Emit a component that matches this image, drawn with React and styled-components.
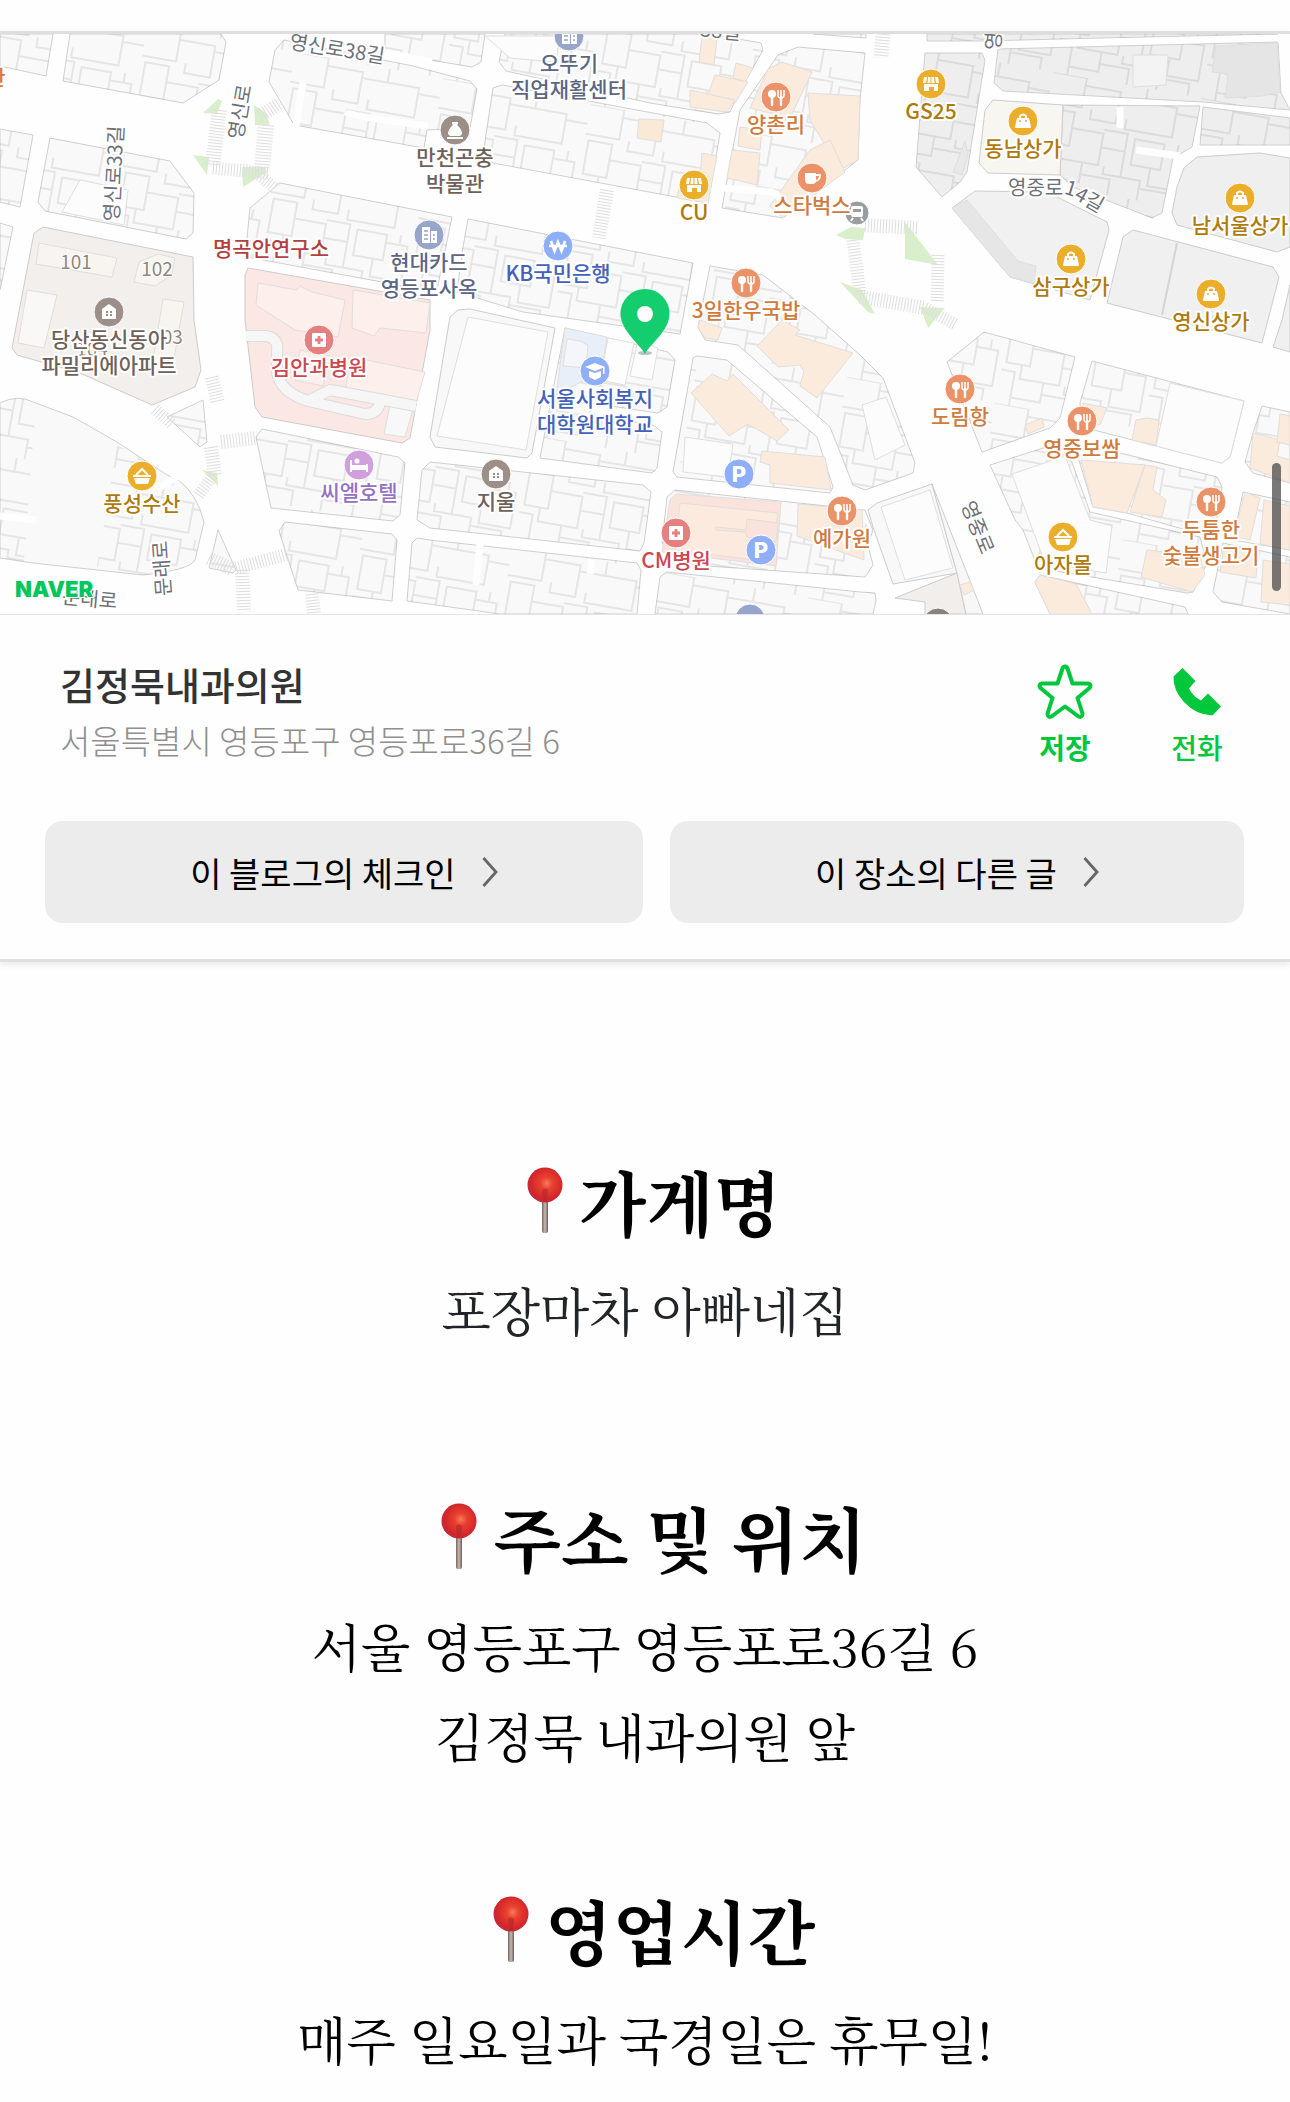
import React from "react";
import styled, { createGlobalStyle } from "styled-components";

const RED = "#cd4650";
const GOLD = "#ae7a0c";
const ORANGE = "#d07a3c";
const SLATE = "#5c6683";
const BLUE = "#4461ba";
const BROWN = "#6e6159";

// city blocks that get the small parcel outlines
const BLOCKS = [
  "0,34 53,34 46,76 0,66",
  "70,34 63,81 183,103 219,80 226,42 221,34",
  "269,82 275,50 284,40 413,66 470,81 477,89 470,128 427,130 424,148 300,126 293,123",
  "385,34 485,34 481,62 472,67 430,60 385,50",
  "505,34 499,62 506,71 650,103 718,114 730,112 738,95 763,50 761,43 710,34",
  "493,88 502,85 707,123 720,133 708,203 493,163 483,155",
  "778,55 798,47 865,53 860,100 858,160 783,218 722,208 728,175 740,110",
  "813,34 866,34 866,38",
  "0,129 33,135 20,207 0,202",
  "50,138 170,161 194,193 193,233 186,239 45,211 38,202",
  "0,223 13,227 0,290",
  "280,183 452,217 437,290 425,290 247,257 247,238 250,208",
  "468,219 693,263 680,334 523,312 457,292 463,247",
  "565,328 668,352 675,360 667,407 658,413 590,403 590,415 653,425 662,432 657,468 652,473 540,458",
  "710,266 763,275 815,315 860,355 883,378 915,463 913,473 865,490 853,485 830,427 738,345 705,340 698,327",
  "693,358 697,356 727,360 817,437 833,487 830,493 677,477 673,472",
  "675,490 865,510 873,530 868,545 873,565 865,577 693,565 662,543 667,497",
  "422,470 430,462 643,485 651,492 644,543 640,551 430,528 417,520",
  "262,429 398,457 405,463 400,515 393,521 271,508 256,437",
  "285,522 392,534 397,540 392,601 298,590 279,531",
  "417,538 430,540 637,563 641,570 637,614 500,614 407,601 412,543",
  "667,572 860,592 875,593 876,600 873,614 655,614 660,577",
  "203,400 207,442 200,447 167,417",
  "218,530 236,570 233,573 209,568",
  "984,332 1075,357 1060,418 1050,428 982,452 947,362",
  "1092,361 1244,401 1230,457 1222,463 1082,427 1080,403",
  "1262,406 1290,412 1290,483 1253,473 1245,462 1253,433",
  "990,465 1043,448 1070,457 1090,512 1200,537 1207,563 1193,592 1187,593 1038,568 1023,530 1015,520",
  "1078,457 1120,453 1217,477 1222,487 1215,530 1193,532 1127,513 1093,507",
  "1243,492 1290,502 1290,550 1233,540",
  "1223,543 1290,557 1290,614 1222,602 1213,592",
  "1040,575 1185,607 1188,614 1050,614 1035,582",
];

// the market side of the map is a darker grey
const GREY_BLOCKS = [
  "927,34 1278,34 1100,38 983,41 927,41",
  "925,53 982,53 985,60 967,172 960,182 942,197 916,167",
  "998,49 1278,42 1281,93 1290,110 1203,102 1003,91 994,83",
  "1063,105 1200,106 1192,147 1173,158 1162,213 1152,218 1073,187 1060,175",
  "1203,107 1290,118 1290,145 1200,145",
];

const PLAIN_AREAS = [
  ["#efefef", "1197,157 1260,153 1290,158 1290,247 1277,252 1177,225 1172,213 1177,187 1184,168"],
  ["#f1f1f1", "952,208 975,191 1047,192 1107,222 1109,230 1090,300 1010,277"],
  ["#f0f0f0", "1133,230 1273,267 1279,277 1262,343 1107,303 1123,237"],
  ["#f0f0f0", "1290,285 1282,320 1273,347 1290,352"],
  ["#f8f6f1", "993,100 1063,105 1060,175 988,173 979,163 985,110"],
  ["#f2efec", "43,227 193,257 194,320 201,370 195,387 152,405 80,373 17,355 12,348 34,233"],
  ["#fbe7e3", "248,268 430,300 430,330 410,438 402,443 262,417 255,407 245,320 245,275"],
  ["#f8f8f8", "458,310 470,309 555,328 532,453 527,458 435,447 430,437 450,317"],
  ["#f8f8f8", "868,510 877,503 932,484 957,573 893,584 873,527"],
  ["#f1eeeb", "895,598 957,573 966,614 925,614 925,602"],
  ["#f7f7f7", "932,484 983,614 966,614 957,573"],
];

const BUILDINGS = [
  // apartments
  ["#f8f5f0", "39,243 117,258 112,277 36,264"],
  ["#f8f5f0", "139,262 158,254 175,258 172,275 155,286 134,282"],
  ["#f8f5f0", "163,299 184,302 171,375 151,372"],
  ["#f9f8f7", "27,290 57,295 44,348 18,343"],
  // eye hospital
  ["#fdefec", "258,283 297,290 300,286 312,292 345,300 338,337 295,330 256,305"],
  ["#fdefec", "353,290 430,303 426,333 380,328 374,336 352,328"],
  ["#fdefec", "352,357 425,372 416,403 345,390"],
  ["#fdefec", "300,350 330,356 323,386 295,380"],
  ["#f8f8f8", "390,405 413,409 405,437 384,434"],
  // CM hospital
  ["#fae3dd", "676,494 781,502 776,566 662,552 670,500"],
  ["#fbeadd", "680,503 778,513 770,562 675,550"],
  ["#fbe3dd", "747,519 778,523 776,542 747,537 745,532 716,530 716,527 746,530"],
  ["#fbebdd", "798,504 862,510 864,560 797,536"],
  // university
  ["#e8eff8", "565,328 607,337 602,371 556,395"],
  ["#f4f6fb", "567,339 580,341 588,345 586,368 563,366"],
  ["#fdfdfd", "608,338 634,343 625,385 600,380"],
  ["#fdfdfd", "638,340 658,348 652,380 630,376"],
  // restaurants
  ["#fbebdd", "712,374 727,381 733,374 789,430 777,441 748,424 729,436 691,393"],
  ["#fbebdd", "762,451 825,457 831,490 770,483 770,465 760,462"],
  ["#fbebdd", "782,320 800,330 795,335 853,353 817,398 800,386 804,371 800,365 778,367 757,346"],
  ["#fbebdd", "700,320 722,328 718,340 705,338 698,327"],
  ["#fbebdd", "768,69 782,62 812,72 790,118 750,108"],
  ["#fbebdd", "808,93 860,96 858,160 840,170 810,120"],
  ["#fbebdd", "740,127 762,130 760,150 738,146"],
  ["#fbebdd", "732,150 760,153 757,185 727,178"],
  ["#fbebdd", "810,150 830,140 845,172 783,218 770,206"],
  ["#fbebdd", "702,37 717,38 714,65 699,62"],
  ["#fbebdd", "736,63 753,68 745,82 733,78"],
  ["#fbebdd", "715,75 748,82 735,103 708,95"],
  ["#fbebdd", "690,90 735,100 727,112 690,107"],
  ["#fbe9d8", "639,119 664,120 661,142 637,138"],
  ["#fbebdd", "702,153 717,156 708,203 677,198 680,185 700,180"],
  ["#fbebdd", "1081,460 1145,465 1127,513 1093,507"],
  ["#fbebdd", "1145,465 1157,467 1153,490 1166,500 1162,517 1130,512"],
  ["#fbebdd", "1147,418 1159,420 1156,445 1132,440 1136,420"],
  ["#fbebdd", "1025,425 1042,418 1044,427 1028,434"],
  ["#fbebdd", "1083,403 1107,408 1100,425 1085,420"],
  ["#fbebdd", "1253,433 1280,440 1277,456 1290,460 1290,483 1250,468"],
  ["#fbebdd", "1280,414 1290,416 1290,445 1277,442"],
  ["#fbebdd", "1245,492 1260,498 1250,540 1234,536"],
  ["#fbebdd", "1264,500 1290,506 1290,550 1260,544"],
  ["#fbebdd", "1147,550 1200,556 1205,575 1192,592 1141,577"],
  ["#fbebdd", "1224,545 1258,552 1256,578 1220,572"],
  ["#fbebdd", "1263,560 1290,564 1290,605 1261,602"],
  ["#fbebdd", "1040,575 1076,584 1092,614 1050,614 1035,582"],
  ["#fbebdd", "960,585 970,582 974,590 964,595"],
  // markets
  ["#e6e6e6", "952,208 967,200 1018,261 1036,266 1034,283 1010,277"],
  ["#f3f3f3", "1133,55 1168,55 1166,85 1133,87"],
  ["#e5e5e5", "1216,46 1277,43 1280,92 1262,96 1225,98 1228,74 1212,72"],
  ["#e8e8e8", "965,141 968,155 962,175 953,172"],
  // big lots
  ["#fcfcfc", "468,317 548,332 526,450 437,436"],
  ["#fcfcfc", "1170,383 1244,401 1230,457 1222,463 1156,446"],
  ["#fcfcfc", "1012,474 1065,456 1090,520 1112,526 1106,573 1045,563"],
  ["#fcfcfc", "862,405 886,397 905,445 875,460"],
  ["#fcfcfc", "881,507 930,490 953,568 905,580"],
  ["#fcfcfc", "685,437 733,444 728,477 683,472"],
  ["#fcfcfc", "485,36 560,36 556,62 510,58"],
  ["#fcfcfc", "80,180 128,190 124,225 62,212"],
];

const ALLEYS = [
  "M303,82 L296,126",
  "M346,112 Q350,116 428,126",
  "M722,188 L772,192 Q782,196 783,210",
  "M1120,107 V128",
  "M1136,150 L1180,156",
  "M0,516 L36,520",
  "M480,544 L476,585",
  "M592,560 L590,574",
  "M382,52 L432,62",
  "M157,489 L177,477",
];

const CROSSWALKS = [
  ["M219,110 L213,165", 15],
  ["M266,125 L262,170", 16],
  ["M213,168 L268,173", 13],
  ["M260,116 L280,103", 13],
  ["M255,172 L275,188", 12],
  ["M607,190 L599,238", 14],
  ["M883,34 L881,58", 15],
  ["M853,240 L860,295", 13],
  ["M865,225 L918,228", 14],
  ["M860,297 L925,308", 14],
  ["M938,255 L937,302", 13],
  ["M925,308 L955,324", 12],
  ["M212,377 L218,403", 14],
  ["M155,409 L173,425", 12],
  ["M221,442 L257,438", 14],
  ["M211,447 L215,475", 14],
  ["M213,475 L198,496", 12],
  ["M209,558 L233,570", 14],
  ["M236,568 L288,554", 13],
  ["M242,570 L244,612", 14],
  ["M312,594 L314,614", 14],
];

const ISLANDS = [
  "203,113 218,99 222,101 217,114",
  "254,105 266,113 270,125 255,125",
  "193,155 209,157 207,175",
  "242,167 265,167 267,172 243,187",
  "202,470 217,473 218,486",
  "836,235 851,227 865,228 863,240 845,239",
  "840,282 862,290 875,314 868,312",
  "905,222 928,252 938,265 905,259",
  "920,307 945,308 928,328",
];

const PLACES = [
  { x: 569, y: 36, icon: "office", bg: "#97a5cb", color: SLATE, lines: ["오뚜기", "직업재활센터"] },
  { x: 455, y: 130, icon: "museum", bg: "#9b8f87", color: BROWN, lines: ["만천곤충", "박물관"] },
  { x: 429, y: 235, icon: "office", bg: "#97a5cb", color: SLATE, lines: ["현대카드", "영등포사옥"] },
  { x: 558, y: 246, icon: "won", bg: "#8eaef5", color: BLUE, lines: ["KB국민은행"] },
  { x: 694, y: 185, icon: "store", bg: "#ebae2b", color: GOLD, lines: ["CU"] },
  { x: 776, y: 97, icon: "food", bg: "#eb9268", color: ORANGE, lines: ["양촌리"] },
  { x: 857, y: 213, icon: "subway", bg: "#9a9d9f", color: SLATE, r: 12, lines: [] },
  { x: 812, y: 178, icon: "cup", bg: "#eb9268", color: ORANGE, lines: ["스타벅스"] },
  { x: 931, y: 84, icon: "store", bg: "#ebae2b", color: GOLD, lines: ["GS25"] },
  { x: 1023, y: 121, icon: "bag", bg: "#ebae2b", color: GOLD, lines: ["동남상가"] },
  { x: 1240, y: 198, icon: "bag", bg: "#ebae2b", color: GOLD, lines: ["남서울상가"] },
  { x: 1071, y: 259, icon: "bag", bg: "#ebae2b", color: GOLD, lines: ["삼구상가"] },
  { x: 1211, y: 294, icon: "bag", bg: "#ebae2b", color: GOLD, lines: ["영신상가"] },
  { x: 746, y: 283, icon: "food", bg: "#eb9268", color: ORANGE, lines: ["3일한우국밥"] },
  { x: 960, y: 389, icon: "food", bg: "#eb9268", color: ORANGE, lines: ["도림항"] },
  { x: 1082, y: 421, icon: "food", bg: "#eb9268", color: ORANGE, lines: ["영중보쌈"] },
  { x: 1211, y: 502, icon: "food", bg: "#eb9268", color: ORANGE, lines: ["두툼한", "숯불생고기"] },
  { x: 842, y: 511, icon: "food", bg: "#eb9268", color: ORANGE, lines: ["예가원"] },
  { x: 1063, y: 537, icon: "basket", bg: "#ebae2b", color: GOLD, lines: ["아자몰"] },
  { x: 142, y: 476, icon: "basket", bg: "#ebae2b", color: GOLD, lines: ["풍성수산"] },
  { x: 109, y: 312, icon: "house", bg: "#9b8f87", color: BROWN, lines: ["당산동신동아", "파밀리에아파트"] },
  { x: 319, y: 340, icon: "hospital", bg: "#e5807e", color: RED, lines: ["김안과병원"] },
  { x: 359, y: 465, icon: "bed", bg: "#cfa0dc", color: "#9570c2", lines: ["씨엘호텔"] },
  { x: 496, y: 474, icon: "house", bg: "#9b8f87", color: BROWN, lines: ["지울"] },
  { x: 676, y: 533, icon: "hospital", bg: "#e5807e", color: RED, lines: ["CM병원"] },
  { x: 739, y: 474, icon: "parking", bg: "#8eaef5", color: BLUE, lines: [] },
  { x: 761, y: 550, icon: "parking", bg: "#8eaef5", color: BLUE, lines: [] },
  { x: 595, y: 371, icon: "school", bg: "#8eaef5", color: BLUE, lines: ["서울사회복지", "대학원대학교"] },
  { x: 750, y: 619, icon: "", bg: "#97a5cb", color: SLATE, lines: [] },
  { x: 938, y: 623, icon: "", bg: "#8b817c", color: BROWN, lines: [] },
];

const ROADS = [
  { x: 336, y: 56, rotate: 9, name: "영신로38길" },
  { x: 247, y: 113, rotate: -80, name: "영신로" },
  { x: 121, y: 174, rotate: -87, name: "영신로33길" },
  { x: 971, y: 530, rotate: 68, name: "영중로" },
  { x: 169, y: 568, rotate: -94, name: "문래로" },
  { x: 89, y: 606, rotate: 5, name: "문래로" },
  { x: 720, y: 38, rotate: 5, name: "38길" },
  { x: 1001, y: 36, rotate: -85, name: "영0" },
];

const SECTIONS = [
  { title: "가게명", lines: ["포장마차 아빠네집"], gap: 120, soft: true },
  {
    title: "주소 및 위치",
    lines: ["서울 영등포구 영등포로36길 6", "김정묵 내과의원 앞"],
    gap: 87,
  },
  { title: "영업시간", lines: ["매주 일요일과 국경일은 휴무일!"], gap: 0 },
];

const Glyph = ({ name, bg }) => {
  switch (name) {
    case "office":
      return (
        <g>
          <path d="M-7,-8 H1 V8 H-7 Z M2,-4 H8 V8 H2 Z" fill="#fff" />
          <path
            d="M-5,-4 H-1 M-5,0 H-1 M-5,4 H-1 M4,0 H6 M4,4 H6"
            stroke={bg}
            strokeWidth="1.6"
          />
        </g>
      );
    case "museum":
      return (
        <path
          d="M-3,-8 H3 V-6 L2,-5 Q7,-1 7,4 L5,6 H-5 L-7,4 Q-7,-1 -2,-5 L-3,-6 Z M-8,7 H8 V9 H-8 Z"
          fill="#fff"
        />
      );
    case "won":
      return (
        <path
          d="M-7,-5 L-3.5,5 L0,-4 L3.5,5 L7,-5 M-9,0 H9"
          fill="none"
          stroke="#fff"
          strokeWidth="2.6"
        />
      );
    case "store":
      return (
        <g fill="#fff">
          <path d="M-7,-7 h3 l-1,6 h-3 Z M-3,-7 h2.5 v6 h-3 Z M.5,-7 h2.5 l.5,6 h-3 Z M4,-7 h3 l1,6 h-3 Z" />
          <path d="M-7,0 H7 V7 H3 V3 H-2 V7 H-7 Z" />
        </g>
      );
    case "food":
      return (
        <g fill="none" stroke="#fff">
          <circle cx="-4" cy="-3" r="4" fill="#fff" stroke="none" />
          <path d="M-4,0 V8 M5,0 V8" strokeWidth="2.4" strokeLinecap="round" />
          <path d="M2,-7 V-2 Q2,1 5,1 Q8,1 8,-2 V-7 M5,-7 V0" strokeWidth="1.6" />
        </g>
      );
    case "subway":
      return (
        <g>
          <rect x="-6" y="-7" width="12" height="11" rx="2" fill="#fff" />
          <path d="M-4,-4 H4 V-1 H-4 Z" fill={bg} />
          <path d="M-4,5 L-6,8 M4,5 L6,8" stroke="#fff" strokeWidth="2" />
        </g>
      );
    case "cup":
      return (
        <g>
          <path d="M-7,-5 H4 V3 Q4,6 0,6 H-3 Q-7,6 -7,2 Z" fill="#fff" />
          <path d="M4,-3 H8 Q8,3 3,3" fill="none" stroke="#fff" strokeWidth="1.8" />
        </g>
      );
    case "bag":
      return (
        <g>
          <path d="M-6,-3 H6 L8,6 Q8,7 7,7 H-7 Q-8,7 -8,6 Z" fill="#fff" />
          <path d="M-3,-2 V-5 Q0,-8 3,-5 V-2" fill="none" stroke="#fff" strokeWidth="2" />
          <circle cx="-3" cy="0" r="1" fill={bg} />
          <circle cx="3" cy="0" r="1" fill={bg} />
        </g>
      );
    case "basket":
      return (
        <g>
          <path d="M-9,-1 H9 V1 H-9 Z M-8,2 H8 L6,8 H-6 Z" fill="#fff" />
          <path d="M-6,-1 L0,-7 L6,-1" fill="none" stroke="#fff" strokeWidth="2" />
        </g>
      );
    case "house":
      return (
        <g>
          <path d="M0,-8 L7,-3 V7 H-7 V-3 Z" fill="#fff" />
          <path d="M-3,-1 h2 v2 h-2 Z M1,-1 h2 v2 h-2 Z M-3,2 h2 v2 h-2 Z M1,2 h2 v2 h-2 Z" fill={bg} />
        </g>
      );
    case "hospital":
      return (
        <g>
          <rect x="-7" y="-7" width="14" height="14" rx="1" fill="#fff" />
          <path d="M-4,0 H4 M0,-4 V4" stroke={bg} strokeWidth="2.8" />
        </g>
      );
    case "bed":
      return (
        <g>
          <path d="M-8,-5 V7 M-8,4 H8 M8,-1 V7" stroke="#fff" strokeWidth="2" />
          <path d="M-7,0 H8 V4 H-7 Z" fill="#fff" />
          <circle cx="-2" cy="-4" r="2.6" fill="#fff" />
        </g>
      );
    case "school":
      return (
        <g fill="#fff">
          <path d="M0,-8 L10,-4 L0,0 L-10,-4 Z" />
          <path d="M-6,0 L0,2 L6,0 V6 L0,9 L-6,6 Z" />
          <path d="M8,-4 H9.5 V3 H8 Z" />
        </g>
      );
    case "parking":
      return (
        <ParkingLetter x="0" y="8">
          P
        </ParkingLetter>
      );
    default:
      return null;
  }
};

const Place = ({ place }) => (
  <g>
    <circle
      cx={place.x}
      cy={place.y}
      r={place.r || 15}
      fill={place.bg}
      stroke="#fff"
    />
    <g transform={`translate(${place.x} ${place.y})`}>
      <Glyph name={place.icon} bg={place.bg} />
    </g>
    {place.lines.map((line, i) => (
      <PlaceName key={line} x={place.x} y={place.y + 35 + i * 26} $color={place.color}>
        {line}
      </PlaceName>
    ))}
  </g>
);

const MapDrawing = () => (
  <MapSvg viewBox="0 34 1290 580" preserveAspectRatio="xMidYMid slice" role="img" aria-label="지도">
    <defs>
      <pattern
        id="parcels"
        width="150"
        height="112"
        patternUnits="userSpaceOnUse"
        patternTransform="rotate(10)"
      >
        <path
          d="M0,0 H34 V30 H0 M34,8 H70 V40 H44 V30 M70,14 H96 V0 M96,14 H128 V44 H80 V34 M128,20 H150
             M4,36 H28 V70 H4 Z M28,52 H60 V84 H20 V70 M60,48 H84 V66 H60 M84,50 V92 H66 V84
             M92,52 H122 V78 H92 Z M122,60 H144 V96 H112 V78 M0,78 H14 V104 H44 V84
             M44,96 H74 V112 M84,92 H104 V112 M104,100 H136 V112 M136,50 V60 M14,104 V112"
          fill="none"
          stroke="#000"
          strokeOpacity="0.08"
          strokeWidth="2"
        />
      </pattern>
    </defs>
    <rect x="0" y="34" width="1290" height="580" fill="#fefefe" />

    <g stroke="#cfcfcf">
      {BLOCKS.map((points) => (
        <polygon key={points} points={points} fill="#f9f9f9" />
      ))}
      {GREY_BLOCKS.map((points) => (
        <polygon key={points} points={points} fill="#eeeeee" />
      ))}
      <path
        d="M0,403 Q18,394 33,402 L73,417 L117,442 L167,475 L177,479 Q197,493 204,522
           L195,560 Q190,570 143,575 L33,563 L0,558 Z"
        fill="#f9f9f9"
      />
    </g>
    <g fill="url(#parcels)">
      {BLOCKS.concat(GREY_BLOCKS).map((points) => (
        <polygon key={points} points={points} />
      ))}
      <path d="M0,403 Q18,394 36,404 L24,562 L0,558 Z" />
      <path d="M117,445 L177,479 Q197,493 204,522 L195,560 Q190,570 143,575 L97,567 Z" />
    </g>
    <g stroke="#cccccc">
      {PLAIN_AREAS.map(([fill, points]) => (
        <polygon key={points} points={points} fill={fill} />
      ))}
    </g>
    <g stroke="#e2dedb" strokeWidth="1">
      {BUILDINGS.map(([fill, points]) => (
        <polygon key={points} points={points} fill={fill} />
      ))}
    </g>
    <path d="M1177,243 L1162,315" stroke="#d4d4d4" strokeWidth="2" />

    {/* driveway of the eye hospital */}
    <g fill="none" strokeLinejoin="round">
      <path
        d="M246,336 H266 Q279,338 277,352 V372 Q280,392 308,401 L365,414 Q378,414 380,402 M310,400 L330,390 L416,406"
        stroke="#dcdcdc"
        strokeWidth="12"
      />
      <path
        d="M246,336 H266 Q279,338 277,352 V372 Q280,392 308,401 L365,414 Q378,414 380,402 M310,400 L330,390 L416,406"
        stroke="#f6f6f6"
        strokeWidth="10"
      />
    </g>

    <g fill="none" stroke="#fefefe" strokeWidth="7">
      {ALLEYS.map((d) => (
        <path key={d} d={d} />
      ))}
    </g>
    <g fill="#d9efcb">
      {ISLANDS.map((points) => (
        <polygon key={points} points={points} />
      ))}
    </g>
    <g fill="none" stroke="#dedede" strokeDasharray="1 2">
      {CROSSWALKS.map(([d, width]) => (
        <path key={d} d={d} strokeWidth={width} />
      ))}
    </g>

    <BuildingNo x="76" y="269">101</BuildingNo>
    <BuildingNo x="157" y="276">102</BuildingNo>
    <BuildingNo x="167" y="344">103</BuildingNo>
    <BuildingNo x="92" y="356">104</BuildingNo>

    {ROADS.map((road) => (
      <RoadName
        key={`${road.name}${road.x}`}
        x={road.x}
        y={road.y}
        transform={`rotate(${road.rotate} ${road.x} ${road.y})`}
      >
        {road.name}
      </RoadName>
    ))}
    <path id="market-road" d="M1008,195 H1068 Q1072,196 1076,200 L1115,222" fill="none" />
    <CurvedRoadName>
      <textPath href="#market-road">영중로14길</textPath>
    </CurvedRoadName>

    <PlaceName x="271" y="256" $color="#b43f40">명곡안연구소</PlaceName>
    <PlaceName x="-4" y="85" $color={ORANGE}>관</PlaceName>
    {PLACES.map((place) => (
      <Place key={`${place.x}-${place.y}`} place={place} />
    ))}

    <ellipse cx="645" cy="353" rx="7" ry="2" fill="#b9c4bd" />
    <path
      d="M645,354 C640,344 620.5,331 620.5,313.5 A24.5,24.5 0 0 1 669.5,313.5 C669.5,331 650,344 645,354 Z"
      fill="#13cd6f"
    />
    <circle cx="645" cy="314" r="8" fill="#fff" />
    <Brand x="15" y="597">NAVER</Brand>
  </MapSvg>
);

const StarIcon = () => (
  <svg width="56" height="56" viewBox="0 0 56 56" fill="none" aria-hidden="true">
    <path
      d="M28 3.5 Q30 3.5 30.5 5.5 L35.5 20.5 H51 Q55 21.5 52.5 25 L40.5 35 L45.5 50.5 Q45.5 55 41.5 53.5 L28 43.5 L14.5 53.5 Q10.5 55 10.5 50.5 L15.5 35 L3.5 25 Q1 21.5 5 20.5 H20.5 L25.5 5.5 Q26 3.5 28 3.5 Z"
      stroke="#00c73c"
      strokeWidth="4"
      strokeLinejoin="round"
    />
  </svg>
);

const PhoneIcon = () => (
  <svg width="56" height="56" viewBox="0 0 56 56" aria-hidden="true">
    <path
      d="M13.5 5 L26.5 18 L20 25.5 Q24 33.5 32 37.5 L39 30.5 L52 43.5 L43.5 52.5 Q27 52 15 39 Q4 27 4.5 13.5 Z"
      fill="#00c73c"
    />
  </svg>
);

const Chevron = () => (
  <svg width="16" height="32" viewBox="0 0 16 32" fill="none" aria-hidden="true">
    <path d="M1.5 2 L14 16 L1.5 30" stroke="#666" strokeWidth="2.8" />
  </svg>
);

const PushPin = ({ id }) => (
  <svg width="60" height="72" viewBox="0 0 60 72" aria-hidden="true">
    <defs>
      <radialGradient id={`ball${id}`} cx="0.55" cy="0.45" r="0.6">
        <stop offset="0" stopColor="#f9795c" />
        <stop offset="0.3" stopColor="#e8402f" />
        <stop offset="0.75" stopColor="#d3262b" />
        <stop offset="1" stopColor="#b92c40" />
      </radialGradient>
      <linearGradient id={`needle${id}`}>
        <stop offset="0" stopColor="#74655f" />
        <stop offset="0.5" stopColor="#c9b9b0" />
        <stop offset="1" stopColor="#6c5c58" />
      </linearGradient>
    </defs>
    <rect x="27" y="34" width="6" height="34" rx="2" fill={`url(#needle${id})`} />
    <circle cx="30" cy="20" r="17.5" fill={`url(#ball${id})`} />
    <path d="M27 25 Q30 22 33 25 L32 36 H28 Z" fill="#b3262c" opacity="0.6" />
  </svg>
);

const App = () => {
  return (
    <Page>
      <GlobalStyle />
      <PlaceCard>
        <MapBox>
          <MapDrawing />
          <ScrollThumb />
        </MapBox>
        <Info>
          <InfoText>
            <ShopName>김정묵내과의원</ShopName>
            <Address>서울특별시 영등포구 영등포로36길 6</Address>
          </InfoText>
          <Actions>
            <ActionButton type="button" $weight={700}>
              <StarIcon />
              저장
            </ActionButton>
            <ActionButton type="button" $weight={500}>
              <PhoneIcon />
              전화
            </ActionButton>
          </Actions>
        </Info>
        <LinkRow>
          <LinkButton href="#checkin">
            이 블로그의 체크인
            <Chevron />
          </LinkButton>
          <LinkButton href="#posts">
            이 장소의 다른 글
            <Chevron />
          </LinkButton>
        </LinkRow>
      </PlaceCard>

      <Post>
        {SECTIONS.map((section, i) => (
          <Section key={section.title} $gap={section.gap}>
            <Heading>
              <PushPin id={i} />
              {section.title}
            </Heading>
            {section.lines.map((line) => (
              <Line key={line} $soft={section.soft}>
                {line}
              </Line>
            ))}
          </Section>
        ))}
      </Post>
    </Page>
  );
};

const GlobalStyle = createGlobalStyle`
  body {
    margin: 0;
    background: #fefefe;
    font-family: "Noto Sans CJK KR", "Noto Sans", sans-serif;
  }
`;

const Page = styled.main`
  padding-top: 31px;
  overflow: hidden;
`;

const PlaceCard = styled.section`
  border-top: 3px solid #dedede;
  border-bottom: 3px solid #dfdfdf;
  box-shadow: 0 3px 6px rgba(0, 0, 0, 0.08);
`;

const MapBox = styled.div`
  position: relative;
  border-bottom: 1px solid #e4e4e4;
`;

const MapSvg = styled.svg`
  display: block;
  width: 100%;
  height: 580px;
`;

const ScrollThumb = styled.div`
  position: absolute;
  right: 9px;
  bottom: 23px;
  width: 9px;
  height: 128px;
  border-radius: 5px;
  background: rgba(75, 75, 75, 0.75);
`;

const MapText = styled.text`
  font-family: "Noto Sans CJK KR", "Noto Sans", sans-serif;
  text-anchor: middle;
  paint-order: stroke;
  stroke: #fff;
  stroke-width: 4px;
  stroke-linejoin: round;
`;

const PlaceName = styled(MapText)`
  font-size: 21px;
  font-weight: 500;
  fill: ${(props) => props.$color};
`;

const RoadName = styled(MapText)`
  font-size: 20px;
  fill: #6d7078;
`;

const CurvedRoadName = styled(RoadName)`
  text-anchor: start;
`;

const BuildingNo = styled(MapText)`
  font-size: 19px;
  fill: #8f8780;
  stroke-width: 2px;
`;

const ParkingLetter = styled.text`
  font-family: Inter, sans-serif;
  font-size: 22px;
  font-weight: 800;
  text-anchor: middle;
  fill: #fff;
`;

const Brand = styled.text`
  font-family: Inter, sans-serif;
  font-size: 22px;
  font-weight: 900;
  fill: #03c75a;
  paint-order: stroke;
  stroke: #fff;
  stroke-width: 2px;
`;

const Info = styled.div`
  display: flex;
  justify-content: space-between;
  align-items: flex-start;
  padding: 41px 51px 0 60px;
`;

const InfoText = styled.div`
  display: flex;
  flex-direction: column;
`;

const ShopName = styled.h2`
  margin: 0;
  font-size: 38px;
  line-height: 56px;
  font-weight: 500;
  color: #333;
`;

const Address = styled.p`
  margin: 0;
  font-size: 33px;
  line-height: 56px;
  font-weight: 300;
  color: #8f8f8f;
`;

const Actions = styled.div`
  display: flex;
  gap: 48px;
`;

const ActionButton = styled.button`
  display: flex;
  flex-direction: column;
  align-items: center;
  gap: 6px;
  width: 84px;
  padding: 7px 0 0;
  border: 0;
  background: none;
  font-family: inherit;
  font-size: 28px;
  line-height: 44px;
  font-weight: ${(props) => props.$weight};
  color: #00c73c;
`;

const LinkRow = styled.div`
  display: flex;
  gap: 27px;
  padding: 52px 46px 36px 45px;
`;

// natural width plus an equal share of what is left
const LinkButton = styled.a`
  flex: 1 1 auto;
  display: flex;
  justify-content: center;
  align-items: center;
  gap: 26px;
  height: 102px;
  border-radius: 18px;
  background: #ececec;
  font-size: 34px;
  color: #000;
  text-decoration: none;
`;

const Post = styled.article`
  padding: 176px 20px 20px;
  text-align: center;
  font-family: "Noto Serif CJK KR", "Noto Sans CJK KR", serif;
`;

const Section = styled.section`
  margin-bottom: ${(props) => props.$gap}px;
`;

const Heading = styled.h3`
  display: flex;
  justify-content: center;
  align-items: center;
  gap: 4px;
  margin: 0;
  padding-left: 6px;
  font-size: 70px;
  line-height: 126px;
  font-weight: 700;
  color: #000;
`;

const Line = styled.p`
  margin: 0;
  font-size: 51px;
  line-height: 90px;
  font-weight: 400;
  color: ${(props) => (props.$soft ? "#222428" : "#000")};
`;

export default App;
